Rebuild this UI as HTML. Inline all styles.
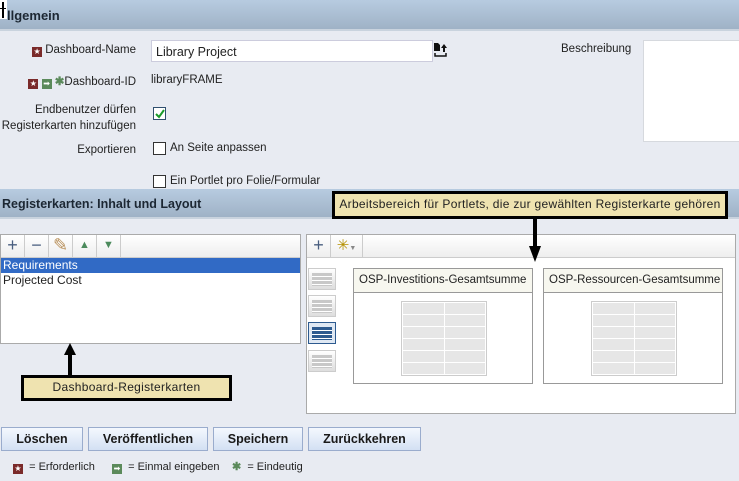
<!DOCTYPE html>
<html><head><meta charset="utf-8"><style>
*{margin:0;padding:0;box-sizing:border-box}
body{width:739px;height:481px;background:#e8ebf2;font-family:"Liberation Sans",Arial,sans-serif;font-size:12px;color:#222;position:relative;overflow:hidden}
.a{position:absolute;white-space:nowrap}
.hdr{position:absolute;left:0;width:739px;background:linear-gradient(#b7cbe0,#9fb2c6);border-bottom:2px solid #c9d3de}
.hdr span{position:absolute;left:4px;font-weight:bold;font-size:13px;color:#1c2733;white-space:nowrap}
.lbl{position:absolute;text-align:right;width:136px;left:0;line-height:17px;white-space:nowrap;font-size:11.5px}
.cb{position:absolute;width:13px;height:13px;border:1px solid #333;background:#fff;left:153px}
.call{position:absolute;background:#efe3b0;border:3px solid #000;font-family:"Liberation Sans",sans-serif;font-size:12px;letter-spacing:0.3px;color:#222;text-align:center;white-space:nowrap}
.btn{position:absolute;top:427px;height:24px;border:1px solid #9aaccd;background:linear-gradient(#f4f8fe,#d3e0f3);font-weight:bold;font-size:12.5px;text-align:center;line-height:22px;color:#1a1a1a}
.tb{position:absolute;width:24px;height:22px;border-right:1px solid #ccc;text-align:center;line-height:21px;font-size:18px;color:#4a5f80}
.grid{position:absolute;left:47px;top:10px;width:86px;height:75px;border:1px solid #ccc;background:#fff;display:grid;grid-template-columns:1fr 1fr;gap:1px;padding:1px}
.grid div{background:#e6e6e6}
.lay{position:absolute;left:308px;width:28px;height:22px;border:1px solid #ccc;background:linear-gradient(#fff,#ddd)}
.lay i{display:block;margin:4px 3px;height:13px;background:repeating-linear-gradient(#c8c8c8 0 3px,#fff 3px 4px)}
.sq{display:inline-block;width:10px;height:10px;color:#fff;font-size:8px;line-height:10px;text-align:center;vertical-align:-1px}
</style></head><body>
<div class="hdr" style="top:0;height:31px"><span style="top:8px;left:7px">llgemein</span></div>
<div class="a" style="left:0;top:0;width:7px;height:19px;background:#fff"></div>
<div class="a" style="left:2px;top:2px;width:2px;height:16px;background:#000"></div>
<div class="a" style="left:0;top:8px;width:6px;height:1px;background:#000"></div>

<div class="lbl" style="top:42px"><span class="sq" style="background:#7a2a2a">★</span> Dashboard-Name</div>
<div class="a" style="left:151px;top:40px;width:282px;height:22px;background:#fff;border:1px solid #ccd;padding:4px 4px;font-size:12.5px">Library Project</div>
<svg class="a" style="left:433px;top:42px" width="16" height="16"><path d="M1 1h4l2 2v6H1z" fill="#111"/><path d="M8 6l3-4 3 4h-2v4h-2V6z" fill="#111"/><path d="M2 11v3h11v-3" stroke="#111" stroke-width="1.5" fill="none"/></svg>
<div class="a" style="left:561px;top:43px;font-size:11.5px">Beschreibung</div>
<div class="a" style="left:643px;top:40px;width:100px;height:102px;background:#fff;border:1px solid #d6d9de"></div>

<div class="lbl" style="top:74px"><span class="sq" style="background:#7a2a2a">★</span> <span class="sq" style="background:#5b8a5b">➡</span> <span style="color:#5b8a5b;font-weight:bold">✱</span>Dashboard-ID</div>
<div class="a" style="left:151px;top:74px;font-size:11.5px">libraryFRAME</div>
<div class="lbl" style="top:102px">Endbenutzer dürfen</div>
<div class="lbl" style="top:118px">Registerkarten hinzufügen</div>
<div class="cb" style="top:107px;border-color:#2f4f6f"><svg width="11" height="11" style="position:absolute;left:0;top:0"><path d="M2 6l3 3 5-7" stroke="#1a9a2a" stroke-width="2" fill="none"/></svg></div>
<div class="lbl" style="top:142px">Exportieren</div>
<div class="cb" style="top:142px"></div><div class="a" style="left:170px;top:142px;font-size:11.5px">An Seite anpassen</div>
<div class="cb" style="top:175px"></div><div class="a" style="left:170px;top:175px;font-size:11.5px">Ein Portlet pro Folie/Formular</div>

<div class="hdr" style="top:189px;height:30px"><span style="top:8px;left:2px;font-size:12.5px">Registerkarten: Inhalt und Layout</span></div>
<div class="call" style="left:332px;top:191px;width:396px;height:28px;line-height:21px">Arbeitsbereich für Portlets, die zur gewählten Registerkarte gehören</div>

<div class="a" style="left:0;top:234px;width:301px;height:110px;background:#fff;border:1px solid #aaa">
<div class="a" style="left:0;top:0;width:299px;height:23px;background:linear-gradient(#fff,#eee);border-bottom:1px solid #ccc">
<div class="tb" style="left:0">+</div><div class="tb" style="left:24px">−</div><div class="tb" style="left:48px;color:#b9905a">✎</div><div class="tb" style="left:72px;font-size:11px;color:#4c8a5c">▲</div><div class="tb" style="left:96px;font-size:11px;color:#4c8a5c">▼</div></div>
<div class="a" style="left:0;top:23px;width:299px;height:15px;background:#316ac5;color:#fff;padding-left:2px;line-height:15px">Requirements</div>
<div class="a" style="left:2px;top:38px;line-height:15px">Projected Cost</div>
</div>
<div class="a" style="left:68px;top:352px;width:4px;height:24px;background:#000"></div>
<div class="a" style="left:64px;top:343px;width:0;height:0;border-left:6px solid transparent;border-right:6px solid transparent;border-bottom:12px solid #000"></div>
<div class="call" style="left:21px;top:375px;width:211px;height:26px;line-height:19px">Dashboard-Registerkarten</div>

<div class="a" style="left:306px;top:234px;width:430px;height:180px;background:#fff;border:1px solid #aaa">
<div class="a" style="left:0;top:0;width:428px;height:23px;background:linear-gradient(#fff,#eee);border-bottom:1px solid #ccc">
<div class="tb" style="left:0">+</div><div class="tb" style="left:24px;width:32px;font-size:15px;color:#b59000">✳<span style="font-size:7px;color:#888">▼</span></div></div>
</div>
<div class="a" style="left:533px;top:219px;width:4px;height:30px;background:#000"></div>
<div class="a" style="left:529px;top:246px;width:0;height:0;border-left:6px solid transparent;border-right:6px solid transparent;border-top:16px solid #000"></div>
<div class="lay" style="top:268px"><i></i></div><div class="lay" style="top:295px"><i></i></div>
<div class="lay" style="top:322px;border:1px solid #2d5a8f;background:#dfe8f3"><i style="background:repeating-linear-gradient(#2d5a8f 0 3px,#fff 3px 4px)"></i></div>
<div class="lay" style="top:350px"><i></i></div>
<div class="a" style="left:353px;top:268px;width:180px;height:116px;background:#fff;border:1px solid #999">
<div style="height:24px;background:#f7f7ef;border-bottom:1px solid #999;padding:5px 5px;font-size:11.5px;white-space:nowrap">OSP-Investitions-Gesamtsumme</div>
<div class="grid" style="top:32px"><div></div><div></div><div></div><div></div><div></div><div></div><div></div><div></div><div></div><div></div><div></div><div></div></div></div>
<div class="a" style="left:543px;top:268px;width:180px;height:116px;background:#fff;border:1px solid #999">
<div style="height:24px;background:#f7f7ef;border-bottom:1px solid #999;padding:5px 5px;font-size:11.5px;white-space:nowrap">OSP-Ressourcen-Gesamtsumme</div>
<div class="grid" style="top:32px"><div></div><div></div><div></div><div></div><div></div><div></div><div></div><div></div><div></div><div></div><div></div><div></div></div></div>

<div class="btn" style="left:1px;width:82px">Löschen</div>
<div class="btn" style="left:88px;width:120px">Veröffentlichen</div>
<div class="btn" style="left:213px;width:90px">Speichern</div>
<div class="btn" style="left:308px;width:113px">Zurückkehren</div>

<div class="a" style="left:13px;top:460px;font-size:11px;line-height:14px"><span class="sq" style="background:#7a2a2a">★</span>&nbsp; = Erforderlich</div>
<div class="a" style="left:112px;top:460px;font-size:11px;line-height:14px"><span class="sq" style="background:#5b8a5b">➡</span>&nbsp; = Einmal eingeben</div>
<div class="a" style="left:232px;top:460px;font-size:11px;line-height:14px"><span style="color:#5b8a5b;font-weight:bold">✱</span>&nbsp; = Eindeutig</div>
</body></html>
